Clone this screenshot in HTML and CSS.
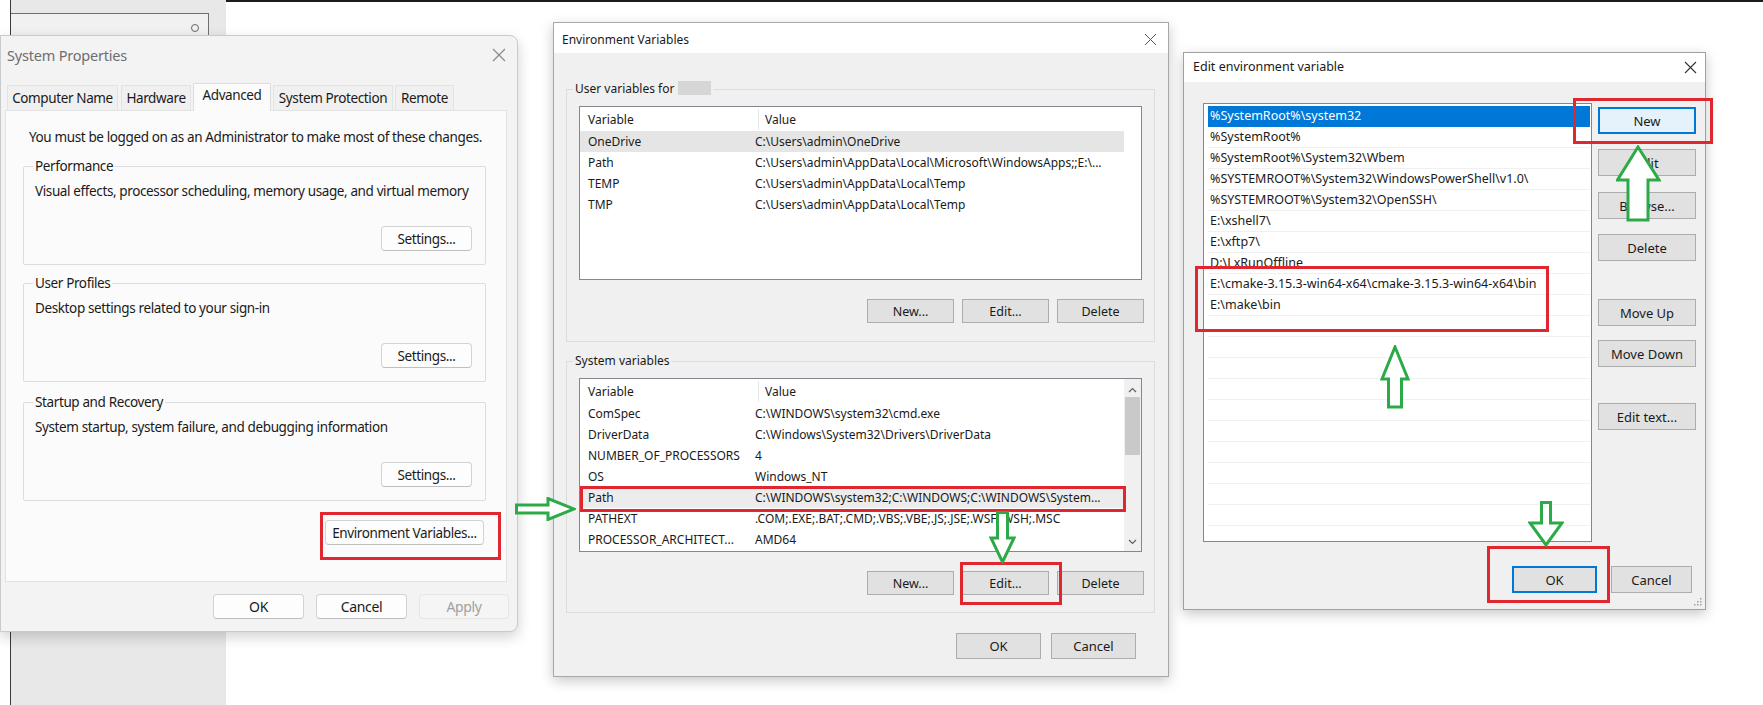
FILE: index.html
```html
<!DOCTYPE html>
<html lang="en">
<head>
  <meta charset="UTF-8">
  <meta name="viewport" content="width=device-width, initial-scale=1.0">
  <title>Environment Variables - Path</title>
  <link rel="stylesheet" href="styles.css">
</head>
<body>
  <div class="topline"></div>

  <!-- settings window behind the dialogs -->
  <div class="backdrop">
    <div class="searchbox">
      <svg class="search-icon" width="10" height="10" viewBox="0 0 10 10"><circle cx="5" cy="5" r="3.5" fill="none" stroke="#666" stroke-width="1"/></svg>
    </div>
  </div>

  <!-- System Properties (Windows 11 look) -->
  <div class="window sysprops">
    <div class="w11-title">
      <span>System Properties</span>
      <svg class="close" width="14" height="14" viewBox="0 0 14 14"><path d="M1 1L13 13M13 1L1 13" stroke="#8a8a8a" stroke-width="1.2"/></svg>
    </div>
    <div class="tabs">
      <div class="tab tab-name">Computer Name</div>
      <div class="tab tab-hw">Hardware</div>
      <div class="tab tab-adv active">Advanced</div>
      <div class="tab tab-prot">System Protection</div>
      <div class="tab tab-rem">Remote</div>
    </div>
    <div class="tabpanel">
      <p class="notice">You must be logged on as an Administrator to make most of these changes.</p>

      <div class="group group-first">
        <div class="legend">Performance</div>
        <p class="desc">Visual effects, processor scheduling, memory usage, and virtual memory</p>
        <div class="btn-row"><button class="btn11 settings">Settings...</button></div>
      </div>

      <div class="group group-second">
        <div class="legend">User Profiles</div>
        <p class="desc">Desktop settings related to your sign-in</p>
        <div class="btn-row"><button class="btn11 settings">Settings...</button></div>
      </div>

      <div class="group group-third">
        <div class="legend">Startup and Recovery</div>
        <p class="desc">System startup, system failure, and debugging information</p>
        <div class="btn-row"><button class="btn11 settings">Settings...</button></div>
      </div>

      <div class="env-row"><button class="btn11 env-btn">Environment Variables...</button></div>
    </div>
    <div class="footer11">
      <button class="btn11 foot-btn">OK</button>
      <button class="btn11 foot-btn">Cancel</button>
      <button class="btn11 foot-btn disabled">Apply</button>
    </div>
  </div>

  <!-- Environment Variables (Windows 10 look) -->
  <div class="window envvars">
    <div class="w10-title">
      <span>Environment Variables</span>
      <svg class="close" width="13" height="13" viewBox="0 0 13 13"><path d="M1 1L12 12M12 1L1 12" stroke="#555" stroke-width="1"/></svg>
    </div>
    <div class="env-body">
      <div class="group10 user-group">
        <div class="legend10">User variables for <span class="blurred"></span></div>
        <div class="vlist">
          <div class="vlist-main">
            <div class="vhead"><span class="c-name">Variable</span><span class="c-value">Value</span></div>
            <div class="vrow hover"><span class="c-name">OneDrive</span><span class="c-value">C:\Users\admin\OneDrive</span></div>
            <div class="vrow"><span class="c-name">Path</span><span class="c-value">C:\Users\admin\AppData\Local\Microsoft\WindowsApps;;E:\...</span></div>
            <div class="vrow"><span class="c-name">TEMP</span><span class="c-value">C:\Users\admin\AppData\Local\Temp</span></div>
            <div class="vrow"><span class="c-name">TMP</span><span class="c-value">C:\Users\admin\AppData\Local\Temp</span></div>
          </div>
        </div>
        <div class="btns10">
          <button class="btn10">New...</button>
          <button class="btn10">Edit...</button>
          <button class="btn10">Delete</button>
        </div>
      </div>

      <div class="group10 sys-group">
        <div class="legend10">System variables</div>
        <div class="vlist">
          <div class="vlist-main">
            <div class="vhead"><span class="c-name">Variable</span><span class="c-value">Value</span></div>
            <div class="vrow"><span class="c-name">ComSpec</span><span class="c-value">C:\WINDOWS\system32\cmd.exe</span></div>
            <div class="vrow"><span class="c-name">DriverData</span><span class="c-value">C:\Windows\System32\Drivers\DriverData</span></div>
            <div class="vrow"><span class="c-name">NUMBER_OF_PROCESSORS</span><span class="c-value">4</span></div>
            <div class="vrow"><span class="c-name">OS</span><span class="c-value">Windows_NT</span></div>
            <div class="vrow selected"><span class="c-name">Path</span><span class="c-value">C:\WINDOWS\system32;C:\WINDOWS;C:\WINDOWS\System...</span></div>
            <div class="vrow"><span class="c-name">PATHEXT</span><span class="c-value">.COM;.EXE;.BAT;.CMD;.VBS;.VBE;.JS;.JSE;.WSF;.WSH;.MSC</span></div>
            <div class="vrow"><span class="c-name">PROCESSOR_ARCHITECT...</span><span class="c-value">AMD64</span></div>
          </div>
          <div class="scrollbar">
            <svg class="chev" width="9" height="6" viewBox="0 0 9 6"><path d="M1 5L4.5 1.5L8 5" fill="none" stroke="#606060" stroke-width="1.2"/></svg>
            <div class="thumb"></div>
            <div class="track"></div>
            <svg class="chev" width="9" height="6" viewBox="0 0 9 6"><path d="M1 1L4.5 4.5L8 1" fill="none" stroke="#606060" stroke-width="1.2"/></svg>
          </div>
        </div>
        <div class="btns10">
          <button class="btn10">New...</button>
          <button class="btn10">Edit...</button>
          <button class="btn10">Delete</button>
        </div>
      </div>

      <div class="footer10">
        <button class="btn10 ok">OK</button>
        <button class="btn10 cancel">Cancel</button>
      </div>
    </div>
  </div>

  <!-- Edit environment variable -->
  <div class="window editvar">
    <div class="w10-title edit-title">
      <span>Edit environment variable</span>
      <svg class="close" width="13" height="13" viewBox="0 0 13 13"><path d="M1 1L12 12M12 1L1 12" stroke="#333" stroke-width="1.1"/></svg>
    </div>
    <div class="edit-body">
      <div class="edit-main">
        <ul class="pathlist">
          <li class="current">%SystemRoot%\system32</li>
          <li>%SystemRoot%</li>
          <li>%SystemRoot%\System32\Wbem</li>
          <li>%SYSTEMROOT%\System32\WindowsPowerShell\v1.0\</li>
          <li>%SYSTEMROOT%\System32\OpenSSH\</li>
          <li>E:\xshell7\</li>
          <li>E:\xftp7\</li>
          <li>D:\LxRunOffline</li>
          <li>E:\cmake-3.15.3-win64-x64\cmake-3.15.3-win64-x64\bin</li>
          <li>E:\make\bin</li>
          <li></li><li></li><li></li><li></li><li></li><li></li>
          <li></li><li></li><li></li><li></li>
        </ul>
        <div class="side-btns">
          <button class="btn10 side focused">New</button>
          <button class="btn10 side gap-s1">Edit</button>
          <button class="btn10 side gap-s2">Browse...</button>
          <button class="btn10 side gap-s1">Delete</button>
          <button class="btn10 side gap-l1">Move Up</button>
          <button class="btn10 side gap-s3">Move Down</button>
          <button class="btn10 side gap-l2">Edit text...</button>
        </div>
      </div>
      <div class="edit-footer">
        <button class="btn10 ok2 focused-ok">OK</button>
        <button class="btn10 cancel2">Cancel</button>
      </div>
    </div>
    <svg class="grip" width="10" height="10" viewBox="0 0 10 10" fill="#a0a0a0"><rect x="7" y="1" width="1.5" height="1.5"/><rect x="4" y="4" width="1.5" height="1.5"/><rect x="7" y="4" width="1.5" height="1.5"/><rect x="1" y="7" width="1.5" height="1.5"/><rect x="4" y="7" width="1.5" height="1.5"/><rect x="7" y="7" width="1.5" height="1.5"/></svg>
  </div>

  <!-- annotations -->
  <div class="mark mark-envbtn"></div>
  <div class="mark mark-path"></div>
  <div class="mark mark-edit"></div>
  <div class="mark mark-new"></div>
  <div class="mark mark-rows"></div>
  <div class="mark mark-ok"></div>

  <svg class="arrow arrow-right" width="61" height="24" viewBox="0 0 61 24"><path d="M1.5 8H33V1.5L59 12L33 22.5V16H1.5Z"/></svg>
  <svg class="arrow arrow-edit" width="27" height="53" viewBox="0 0 27 53"><path d="M8.5 1.5H18.5V27H25L13.5 51L2 27H8.5Z"/></svg>
  <svg class="arrow arrow-new" width="45" height="77" viewBox="0 0 45 77"><path d="M22 2L43 35H32V75H12V35H1.5Z"/></svg>
  <svg class="arrow arrow-list" width="30" height="64" viewBox="0 0 30 64"><path d="M15 2L28 34H21.5V62H8.5V34H2Z"/></svg>
  <svg class="arrow arrow-ok" width="36" height="46" viewBox="0 0 36 46"><path d="M13.5 1.5H22.5V22H34L18 44L2 22H13.5Z"/></svg>
</body>
</html>
```

FILE: styles.css
```css
body {
  margin: 0;
  width: 1763px;
  height: 705px;
  overflow: hidden;
  position: relative;
  background-color: #fff;
  font-family: "Noto Sans", "DejaVu Sans", sans-serif;
  color: #1a1a1a;
}

p {
  margin: 0;
}

button {
  font-family: inherit;
  color: #1a1a1a;
  padding: 0;
  letter-spacing: inherit;
}

.topline {
  position: absolute;
  left: 10px;
  right: 0;
  top: 0;
  height: 2px;
  background-color: #1c1c1c;
}

.backdrop {
  position: absolute;
  left: 10px;
  top: 0;
  width: 215px;
  height: 705px;
  background-color: #e8e8e8;
  border-left: 1px solid #3a3a3a;
}

.searchbox {
  margin-top: 13px;
  width: 198px;
  height: 40px;
  box-sizing: border-box;
  border: 1px solid #707070;
  border-left: none;
  background-color: #f1f1f1;
  display: flex;
  justify-content: flex-end;
  padding: 9px 8px 0 0;
}

.window {
  position: absolute;
  box-sizing: border-box;
}

/* ---------- System Properties ---------- */

.sysprops {
  left: 0;
  top: 35px;
  width: 518px;
  height: 597px;
  background-color: #f3f3f3;
  border: 1px solid #cacaca;
  border-radius: 0 8px 8px 0;
  box-shadow: 0 5px 14px rgba(0, 0, 0, 0.18);
  font-size: 13.5px;
  letter-spacing: -0.38px;
}

.w11-title {
  height: 47px;
  box-sizing: border-box;
  display: flex;
  align-items: flex-start;
  padding: 9px 0 0 6px;
  line-height: 20px;
  color: #6e6e6e;
  font-size: 14.5px;
  letter-spacing: -0.2px;
}

.w11-title .close {
  margin: 3px 11px 0 auto;
}

.tabs {
  display: flex;
  align-items: flex-end;
  height: 27px;
  padding-left: 6px;
  position: relative;
  z-index: 1;
}

.tab {
  height: 25px;
  box-sizing: border-box;
  line-height: 24px;
  text-align: center;
  background-color: #f0f0f0;
  border: 1px solid #e3e3e3;
  border-bottom: none;
  margin-right: 2px;
  color: #1a1a1a;
  white-space: nowrap;
}

.tab-name { width: 111px; margin-right: 3px; }
.tab-hw { width: 70px; }
.tab-adv { width: 78px; }
.tab-prot { width: 120px; }
.tab-rem { width: 59px; }

.tab.active {
  height: 28px;
  margin-bottom: -1px;
  background-color: #fbfbfb;
  border-color: #dedede;
  line-height: 22px;
}

.tabpanel {
  margin: 0 10px 0 4px;
  height: 472px;
  box-sizing: border-box;
  border: 1px solid #e2e2e2;
  background-color: #fbfbfb;
  padding: 17px 20px 0 17px;
}

.notice {
  margin-left: 6px;
  line-height: 18px;
  white-space: nowrap;
}

.group {
  border: 1px solid #dddddd;
  border-radius: 2px;
  padding: 0 13px 13px 11px;
}

.group-first { margin-top: 20px; }
.group-second { margin-top: 18px; }
.group-third { margin-top: 20px; }

.legend {
  display: table;
  margin: -10px 0 0 -2px;
  padding: 0 2px;
  line-height: 18px;
  background-color: #fbfbfb;
}

.desc {
  margin-top: 7px;
  line-height: 18px;
  white-space: nowrap;
}

.btn-row {
  display: flex;
  justify-content: flex-end;
  margin-top: 26px;
}

.btn11 {
  height: 25px;
  box-sizing: border-box;
  background-color: #fdfdfd;
  border: 1px solid #d3d3d3;
  border-bottom-color: #bfbfbf;
  border-radius: 4px;
  font-size: 13.5px;
}

.settings {
  width: 91px;
}

.env-row {
  display: flex;
  justify-content: flex-end;
  margin: 19px 2px 0 0;
}

.env-btn {
  width: 159px;
}

.footer11 {
  display: flex;
  justify-content: flex-end;
  gap: 12px;
  padding: 12px 8px 0 0;
}

.foot-btn {
  width: 91px;
  font-size: 14px;
}

.foot-btn.disabled {
  width: 90px;
  color: #a0a0a0;
  background-color: #f5f5f5;
  border-color: #e6e6e6;
}

/* ---------- Environment Variables ---------- */

.envvars {
  left: 553px;
  top: 22px;
  width: 616px;
  height: 655px;
  background-color: #f0f0f0;
  border: 1px solid #a8a8a8;
  box-shadow: 0 4px 12px rgba(0, 0, 0, 0.22);
  font-size: 12px;
}

.w10-title {
  height: 30px;
  box-sizing: border-box;
  background-color: #fff;
  display: flex;
  align-items: flex-start;
  padding: 8px 0 0 8px;
  line-height: 18px;
  font-size: 12px;
}

.w10-title .close {
  margin: 2px 11px 0 auto;
}

.env-body {
  padding: 0 13px 0 12px;
}

.group10 {
  border: 1px solid #dcdcdc;
  padding: 0 10px 17px 12px;
}

.user-group { margin-top: 36px; padding-bottom: 18px; }
.sys-group { margin-top: 19px; }

.legend10 {
  display: table;
  margin: -10px 0 0 -6px;
  padding: 0 2px;
  line-height: 18px;
  background-color: #f0f0f0;
}

.blurred {
  display: inline-block;
  width: 33px;
  height: 14px;
  vertical-align: -2px;
  background-color: #d6d6d6;
}

.vlist {
  margin-top: 8px;
  width: 563px;
  height: 174px;
  box-sizing: border-box;
  border: 1px solid #828790;
  background-color: #fff;
  display: flex;
  overflow: hidden;
}

.vlist-main {
  flex: 1;
  padding-top: 1px;
}

.vhead {
  height: 23px;
  display: flex;
  align-items: center;
}

.vhead .c-name {
  width: 170px;
  padding-left: 8px;
  line-height: 21px;
  border-right: 1px solid #e8e8e8;
}

.vhead .c-value {
  padding-left: 6px;
}

.vrow {
  height: 21px;
  display: flex;
  align-items: center;
  white-space: nowrap;
}

.vrow .c-name {
  width: 167px;
  padding-left: 8px;
  overflow: hidden;
}

.vrow.hover {
  background-color: #e5e5e5;
  margin-right: 17px;
}

.vrow.selected {
  background-color: #ececec;
}

.scrollbar {
  width: 17px;
  background-color: #f0f0f0;
  display: flex;
  flex-direction: column;
  align-items: center;
  padding: 8px 0 6px;
  box-sizing: border-box;
}

.thumb {
  width: 15px;
  height: 58px;
  margin-top: 4px;
  background-color: #c9c9c9;
}

.track {
  flex: 1;
}

.btns10 {
  display: flex;
  justify-content: flex-end;
  gap: 8px;
  margin-top: 19px;
}

.btn10 {
  height: 24px;
  box-sizing: border-box;
  width: 87px;
  background-color: #e1e1e1;
  border: 1px solid #adadad;
  font-size: 12.5px;
}

.footer10 {
  display: flex;
  justify-content: flex-end;
  gap: 10px;
  margin-top: 20px;
  padding-right: 19px;
}

.footer10 .btn10 {
  height: 26px;
  width: 85px;
  font-size: 13px;
}

/* ---------- Edit environment variable ---------- */

.editvar {
  left: 1183px;
  top: 52px;
  width: 523px;
  height: 558px;
  background-color: #f0f0f0;
  border: 1px solid #a0a0a0;
  box-shadow: 0 4px 12px rgba(0, 0, 0, 0.22);
  font-size: 12.5px;
}

.edit-title {
  height: 29px;
  padding: 5px 0 0 9px;
  font-size: 12.5px;
}

.edit-title .close {
  margin: 3px 8px 0 auto;
}

.edit-body {
  padding: 21px 9px 0 19px;
}

.edit-main {
  display: flex;
  align-items: flex-start;
}

.pathlist {
  list-style: none;
  margin: 0;
  width: 389px;
  height: 439px;
  box-sizing: border-box;
  border: 1px solid #828790;
  background-color: #fff;
  padding: 2px 1px 0 4px;
  overflow: hidden;
}

.pathlist li {
  height: 21px;
  box-sizing: border-box;
  line-height: 20px;
  padding-left: 2px;
  border-bottom: 1px solid #f0f0f0;
  white-space: nowrap;
}

.pathlist li.current {
  background-color: #0078d7;
  color: #fff;
  border-bottom-color: #0078d7;
}

.side-btns {
  margin-left: 6px;
  padding-top: 4px;
  display: flex;
  flex-direction: column;
}

.btn10.side {
  width: 98px;
  height: 27px;
  font-size: 13px;
}

.btn10.focused {
  background-color: #e5f1fb;
  border: 2px solid #0078d7;
}

.gap-s1 { margin-top: 15px; }
.gap-s2 { margin-top: 16px; }
.gap-s3 { margin-top: 14px; }
.gap-l1 { margin-top: 38px; }
.gap-l2 { margin-top: 36px; }

.edit-footer {
  display: flex;
  justify-content: flex-end;
  gap: 14px;
  margin-top: 24px;
  padding-right: 4px;
}

.btn10.ok2 {
  width: 85px;
  height: 27px;
  font-size: 13px;
}

.btn10.cancel2 {
  width: 81px;
  height: 27px;
  font-size: 13px;
}

.btn10.focused-ok {
  border: 2px solid #0078d7;
}

.grip {
  position: absolute;
  right: 2px;
  bottom: 2px;
}

/* ---------- annotations ---------- */

.mark {
  position: absolute;
  box-sizing: border-box;
  border: 3px solid #e0262f;
}

.mark-envbtn { left: 320px; top: 512px; width: 181px; height: 48px; }
.mark-path { left: 580px; top: 486px; width: 546px; height: 26px; }
.mark-edit { left: 960px; top: 562px; width: 102px; height: 43px; }
.mark-new { left: 1573px; top: 98px; width: 140px; height: 46px; }
.mark-rows { left: 1195px; top: 266px; width: 354px; height: 66px; }
.mark-ok { left: 1487px; top: 546px; width: 123px; height: 57px; }

.arrow {
  position: absolute;
  fill: #fff;
  stroke: #2caa48;
  stroke-width: 3;
  stroke-linejoin: miter;
}

.arrow-right { left: 515px; top: 497px; }
.arrow-edit { left: 989px; top: 511px; }
.arrow-new { left: 1616px; top: 145px; }
.arrow-list { left: 1380px; top: 345px; }
.arrow-ok { left: 1528px; top: 501px; }
```
